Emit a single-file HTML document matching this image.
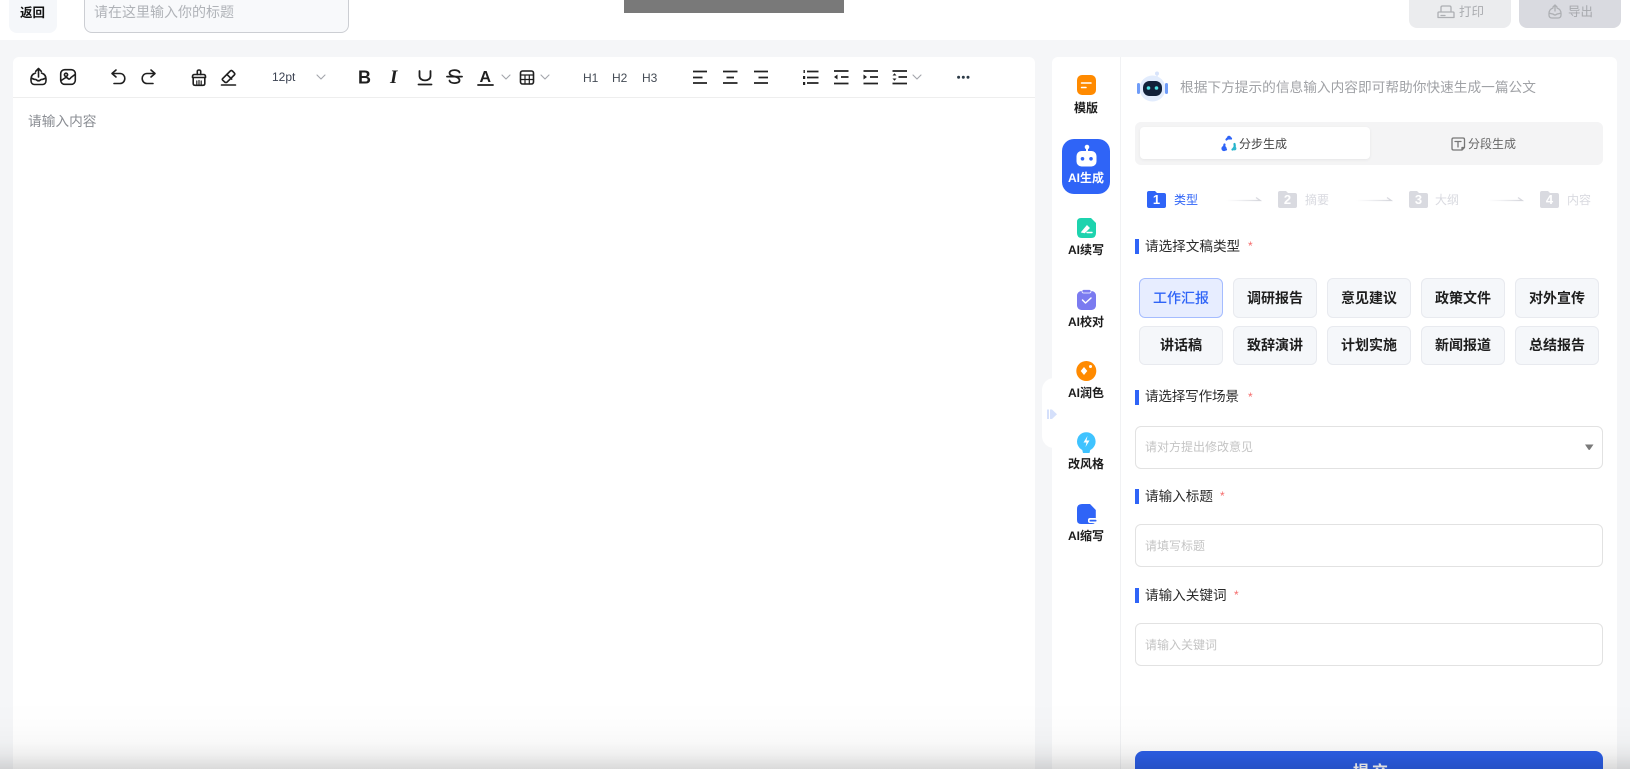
<!DOCTYPE html>
<html lang="zh-CN">
<head>
<meta charset="utf-8">
<title>AI 公文</title>
<style>
html,body{margin:0;padding:0;width:1630px;height:769px;overflow:hidden;background:#f5f6f8;font-family:"Liberation Sans","Noto Sans CJK SC",sans-serif;}
#app{position:relative;width:1630px;height:769px;overflow:hidden;background:#f5f6f8;}
div,span{position:absolute;box-sizing:border-box;}
.t{white-space:nowrap;line-height:20px;height:20px;}
.nav{width:48px;left:1062px;text-align:center;font-size:12px;font-weight:700;color:#1c1c1c;}
.chip{width:84px;background:#f5f7fa;border:1px solid #e8eaef;border-radius:6px;text-align:center;font-size:14px;font-weight:700;color:#1e1e1e;line-height:37px;}
.chip.a{background:#e7edff;border-color:#a5bcff;color:#2f64f7;font-weight:500;}
.bar{left:1135px;width:3.5px;height:15px;background:#2f64f7;}
.lab{left:1145px;font-size:13.6px;color:#2a2a2a;}
.star{font-size:12px;color:#f56c6c;}
.inp{left:1135px;width:468px;height:43px;background:#fff;border:1px solid #e2e2e2;border-radius:6px;}
.ph{left:1145px;font-size:12px;color:#c4c4c4;}
.step{font-size:12px;color:#d9dae0;}
.num{font-family:"Liberation Sans",sans-serif;font-size:13px;font-weight:700;color:#fff;width:19px;text-align:center;}
</style>
</head>
<body>
<div id="app">
<div style="left:0;top:0;width:1630px;height:40px;background:#fff;"></div>
<div style="left:9px;top:-8px;width:48px;height:41px;background:#f5f7fa;border-radius:8px;"></div>
<span class="t" style="left:20px;top:3px;font-size:12.5px;font-weight:700;color:#111;">返回</span>
<div style="left:84px;top:-8px;width:265px;height:41px;background:#f8f9fb;border:1px solid #ccced3;border-radius:8px;"></div>
<span class="t" style="left:94px;top:2px;font-size:14px;color:#b0b3b8;">请在这里输入你的标题</span>
<div style="left:624px;top:0;width:220px;height:13px;background:#797979;"></div>
<div style="left:1409px;top:-8px;width:102px;height:36px;background:#ebecee;border-radius:8px;"></div>
<div style="left:1519px;top:-8px;width:102px;height:36px;background:#d9dae0;border-radius:8px;"></div>
<span class="t" style="left:1459px;top:2px;font-size:12.5px;color:#aaacb0;">打印</span>
<span class="t" style="left:1568px;top:2px;font-size:12.5px;color:#a6a8ad;">导出</span>

<div style="left:13px;top:57px;width:1022px;height:720px;background:#fff;border-radius:6px 6px 0 0;"></div>
<div style="left:13px;top:97px;width:1022px;height:1px;background:#eeeeee;"></div>
<span class="t" style="left:272px;top:67px;font-size:12px;color:#3b4252;">12pt</span>
<span class="t" style="left:583px;top:68px;font-size:12px;color:#444b55;">H1</span>
<span class="t" style="left:612px;top:68px;font-size:12px;color:#444b55;">H2</span>
<span class="t" style="left:642px;top:68px;font-size:12px;color:#444b55;">H3</span>
<span class="t" style="left:28px;top:112px;font-size:13.7px;color:#8a8d93;">请输入内容</span>

<div style="left:1052px;top:57px;width:565px;height:720px;background:#fff;border-radius:6px 6px 0 0;"></div>
<div style="left:1120px;top:57px;width:1px;height:720px;background:#f1f2f4;"></div>
<div style="left:1042px;top:378px;width:14px;height:70px;background:#fff;border-radius:12px 0 0 12px;"></div>

<div style="left:1062px;top:139px;width:48px;height:55px;background:#2f64f7;border-radius:12px;"></div>
<span class="t nav" style="top:98px;">模版</span>
<span class="t nav" style="top:168px;color:#fff;">AI生成</span>
<span class="t nav" style="top:240px;">AI续写</span>
<span class="t nav" style="top:312px;">AI校对</span>
<span class="t nav" style="top:383px;">AI润色</span>
<span class="t nav" style="top:454px;">改风格</span>
<span class="t nav" style="top:526px;">AI缩写</span>

<span class="t" style="left:1180px;top:78px;font-size:13.7px;color:#a0a2a6;">根据下方提示的信息输入内容即可帮助你快速生成一篇公文</span>
<div style="left:1135px;top:122px;width:468px;height:43px;background:#f4f4f5;border-radius:6px;"></div>
<div style="left:1140px;top:127px;width:230px;height:32px;background:#fff;border-radius:4px;box-shadow:0 1px 3px rgba(0,0,0,.06);"></div>
<span class="t" style="left:1239px;top:134px;font-size:12px;color:#444;">分步生成</span>
<span class="t" style="left:1468px;top:134px;font-size:12px;color:#666;">分段生成</span>

<span class="t step" style="left:1174px;top:190px;color:#2f64f7;">类型</span>
<span class="t step" style="left:1305px;top:190px;">摘要</span>
<span class="t step" style="left:1435px;top:190px;">大纲</span>
<span class="t step" style="left:1567px;top:190px;">内容</span>

<div class="bar" style="top:239px;"></div>
<span class="t lab" style="top:237px;">请选择文稿类型</span>
<span class="t star" style="left:1248px;top:236px;">*</span>

<div class="chip a" style="left:1139px;top:278px;height:40px;line-height:38px;">工作汇报</div>
<div class="chip" style="left:1233px;top:278px;height:40px;line-height:38px;">调研报告</div>
<div class="chip" style="left:1327px;top:278px;height:40px;line-height:38px;">意见建议</div>
<div class="chip" style="left:1421px;top:278px;height:40px;line-height:38px;">政策文件</div>
<div class="chip" style="left:1515px;top:278px;height:40px;line-height:38px;">对外宣传</div>
<div class="chip" style="left:1139px;top:326px;height:39px;">讲话稿</div>
<div class="chip" style="left:1233px;top:326px;height:39px;">致辞演讲</div>
<div class="chip" style="left:1327px;top:326px;height:39px;">计划实施</div>
<div class="chip" style="left:1421px;top:326px;height:39px;">新闻报道</div>
<div class="chip" style="left:1515px;top:326px;height:39px;">总结报告</div>

<div class="bar" style="top:390px;"></div>
<span class="t lab" style="top:387px;letter-spacing:-.2px;">请选择写作场景</span>
<span class="t star" style="left:1248px;top:387px;">*</span>
<div class="inp" style="top:426px;"></div>
<span class="t ph" style="top:437px;">请对方提出修改意见</span>

<div class="bar" style="top:489px;"></div>
<span class="t lab" style="top:487px;">请输入标题</span>
<span class="t star" style="left:1220px;top:486px;">*</span>
<div class="inp" style="top:524px;"></div>
<span class="t ph" style="top:536px;">请填写标题</span>

<div class="bar" style="top:588px;"></div>
<span class="t lab" style="top:586px;">请输入关键词</span>
<span class="t star" style="left:1234px;top:585px;">*</span>
<div class="inp" style="top:623px;"></div>
<span class="t ph" style="top:635px;">请输入关键词</span>

<div style="left:1135px;top:751px;width:468px;height:44px;background:#2c5fe8;border-radius:8px;"></div>
<span class="t" style="left:1353px;top:763px;font-size:16px;font-weight:700;color:#fff;letter-spacing:3px;">提交</span>

<svg width="1630" height="769" viewBox="0 0 1630 769" style="position:absolute;left:0;top:0;">
<g fill="none" stroke="#adafb3" stroke-width="1.3" stroke-linecap="round" stroke-linejoin="round">
<path d="M1441 12V7.5Q1441 6 1442.5 6H1449.5Q1451 6 1451 7.5V12M1439 12H1453Q1454 12 1454 13V17.5H1438V13Q1438 12 1439 12ZM1441 15.5H1445"/>
<path d="M1553 8C1550 9 1549 11 1549 13.5V15C1549 17 1550 18 1552 18H1558C1560 18 1561 17 1561 15V13.5C1561 11 1560 9 1557 8M1555 5V11M1553 7L1555 5L1557 7M1549 13Q1552 14 1553 14Q1555 16 1557 14Q1558 14 1561 13"/>
</g>

<g fill="none" stroke="#1f1f1f" stroke-width="1.6" stroke-linecap="round" stroke-linejoin="round">
<g transform="translate(38.5,76.5)">
<path d="M-3 -3.5C-6 -2.5 -7.5 -.5 -7.5 2.5V4C-7.5 6.500 -6 8 -4 8H4C6 8 7.5 6.500 7.5 4V2.5C7.5 -.5 6 -2.500 3 -3.500"/>
<path d="M0 -8V0.500M-2.800 -5.200L0 -8L2.800 -5.200"/>
<path d="M-7.300 1.500Q-4.500 3 -2.600 3Q0 5.500 2.600 3Q4.500 3 7.300 1.500"/>
</g>
<g transform="translate(68,77)">
<rect x="-7.3" y="-7.3" width="14.6" height="14.6" rx="4"/>
<circle cx="-2" cy="-2.2" r="1.6"/>
<path d="M-6.8 3.5L-3 1Q-1.5 0 0 1.5Q1.5 3 3 .5L7 -2.5"/>
</g>
<g transform="translate(118.5,77)">
<path d="M-2.5 -7L-6.5 -3.5L-2.5 0"/>
<path d="M-6.2 -3.5H1.5C4.5 -3.5 6.3 -1.2 6.3 1.5C6.3 4.3 4.3 6.5 1.5 6.5H-4.5"/>
</g>
<g transform="translate(148.5,77)">
<path d="M2.5 -7L6.5 -3.5L2.5 0"/>
<path d="M6.2 -3.5H-1.5C-4.5 -3.5 -6.3 -1.2 -6.3 1.5C-6.3 4.3 -4.3 6.5 -1.5 6.5H4.5"/>
</g>
<g transform="translate(199,78)">
<path d="M-1.7 -3.5V-6.5Q-1.7 -8 0 -8Q1.7 -8 1.7 -6.5V-3.5"/>
<path d="M-6.5 -.5V-1.5Q-6.5 -3.5 -4.5 -3.5H4.5Q6.5 -3.5 6.5 -1.5V-.5H-6.5Z"/>
<path d="M-5.8 -.5V5.5Q-5.8 7.3 -4 7.3H4Q5.8 7.3 5.8 5.5V-.5"/>
<path d="M-2.2 3V7M0 2.5V7M2.2 3V7" stroke-width="1.2"/>
</g>
<g transform="translate(228.5,77)">
<path d="M-5.8 1.6L1.8 -6Q2.8 -7 3.9 -6L5.8 -4.1Q6.8 -3 5.8 -2L-1.8 5.4H-3.4L-5.8 3.2Q-6.6 2.4 -5.8 1.6Z"/>
<path d="M-1.6 -2.6L3.2 2.1"/>
<path d="M-7 8H7"/>
</g>
</g>

<g fill="none" stroke="#a3a6ac" stroke-width="1.1" stroke-linecap="round" stroke-linejoin="round">
<path d="M317 75L321 79L325 75"/>
<path d="M502 75L506 79L510 75"/>
<path d="M541 75L545 79L549 75"/>
<path d="M913 75L917 79L921 75"/>
</g>

<g fill="#1f1f1f" font-family="Liberation Sans, sans-serif" font-size="18">
<text x="358" y="83.5" font-weight="700">B</text>
<text x="390" y="83" font-family="Liberation Serif, serif" font-style="italic" font-weight="700" font-size="19">I</text>
<text x="479.500" y="82" font-size="16" font-weight="700">A</text>
</g>
<g fill="none" stroke="#1f1f1f" stroke-width="1.8" stroke-linecap="round" stroke-linejoin="round">
<path d="M419.500 71V76C419.500 81.800 430.500 81.800 430.500 76V71"/>
<path d="M418.500 84.500H431.500"/>
<path d="M459.500 72.500C459 69.500 450 69 449.500 73C449.500 75 452 76 454.500 76.500C457 77 459.500 78 459.500 80.500C459.500 84 450 84 449.500 80.500"/>
<path d="M447 76.600H462"/>
<path d="M478 85H493"/>
<rect x="520.500" y="71" width="13" height="13" rx="2" stroke-width="1.600"/>
<path d="M520.500 75H533.500M520.500 79.500H533.500M525 75V84M529.300 75V84" stroke-width="1.200"/>
</g>

<g fill="none" stroke="#222" stroke-width="1.700">
<path d="M693 71.500H707M693 77.500H702.500M693 83H707"/>
<path d="M723 71.500H737.500M726.500 77.500H734M723 83H737.500"/>
<path d="M754 71.500H768M758.500 77.500H768M754 83H768"/>
<path d="M807 71.500H818.500M807 77.500H818.500M807 83H818.500"/>
<path d="M834 71H848.500M841 77H848.500M834 83.500H848.500"/>
<path d="M863.500 71H878M870 77H878M863.500 83.500H878"/>
<path d="M892.500 71H907M898.500 77H907M892.500 83.500H907"/>
</g>
<g fill="#222">
<path d="M837.500 74.500V79.500L834 77Z"/>
<path d="M863.500 74.500V79.500L867 77Z"/>
<path d="M892.500 75.500H896.500L894.500 73.300ZM892.500 78.500H896.500L894.500 80.700Z"/>
<rect x="803.500" y="70" width="1.400" height="3"/>
<rect x="803" y="76" width="2.200" height="3"/>
<rect x="803" y="82" width="2.200" height="3"/>
<circle cx="958.600" cy="77.300" r="1.500" fill="#2c3a46"/>
<circle cx="963.300" cy="77.300" r="1.500" fill="#2c3a46"/>
<circle cx="968" cy="77.300" r="1.500" fill="#2c3a46"/>
</g>

<rect x="1077" y="75" width="19" height="20" rx="5" fill="#ff8a00"/>
<path d="M1081.500 83H1091M1081.500 87.500H1086" stroke="#fff" stroke-width="1.500" stroke-linecap="round"/>

<g fill="#fff">
<circle cx="1087" cy="147" r="2.300"/>
<rect x="1086" y="148" width="2" height="4"/>
<rect x="1076.500" y="151" width="20" height="15.500" rx="5"/>
</g>
<circle cx="1082.500" cy="158.800" r="1.800" fill="#2f64f7"/>
<circle cx="1091" cy="158.800" r="1.800" fill="#2f64f7"/>

<path d="M1081 218H1091L1096 223V233Q1096 238 1091 238H1082Q1077 238 1077 233V222Q1077 218 1081 218Z" fill="#1dd3ae"/>
<path d="M1082 232L1087 226L1089 228L1084.500 232.500ZM1087 232.500H1092" stroke="#fff" stroke-width="1.400" fill="#fff" stroke-linecap="round"/>

<rect x="1077" y="291" width="19" height="19" rx="4.500" fill="#7b7bf0"/>
<rect x="1082" y="289.500" width="9" height="3.500" rx="1.500" fill="#7b7bf0" stroke="#fff" stroke-width=".7"/>
<path d="M1082.500 300L1085.500 303L1091 298" fill="none" stroke="#fff" stroke-width="1.500" stroke-linecap="round" stroke-linejoin="round"/>

<circle cx="1086.300" cy="371" r="10" fill="#ff8a00"/>
<path d="M1084 367L1087.300 371L1084 375L1080.700 371Z" fill="#fff"/>
<circle cx="1090.500" cy="366.500" r="1.500" fill="#fff"/>

<circle cx="1086.300" cy="441.500" r="9.300" fill="#3fc3ff"/>
<path d="M1082 449H1090.500L1089.500 453H1083Z" fill="#3fc3ff"/>
<path d="M1087.500 436L1083.500 442.500H1086.500L1085.500 447L1089.500 440.500H1086.500Z" fill="#fff"/>

<path d="M1082 504H1090L1095.800 510V520Q1095.800 524 1091.800 524H1081Q1077 524 1077 520V509Q1077 504 1082 504Z" fill="#2f64f7"/>
<rect x="1088" y="518" width="9" height="5" rx="2" fill="#fff"/>
<rect x="1089.500" y="519.800" width="7" height="1.700" rx=".8" fill="#2f64f7"/>

<path d="M1047 409.500H1049V419H1047ZM1050 409.500H1052L1057 414.300L1052 419H1050Z" fill="#d5e0fb"/>

<!-- robot -->
<circle cx="1157" cy="73.500" r="2" fill="#d8e4fb"/>
<rect x="1156.400" y="75" width="1.200" height="3" fill="#d8e4fb"/>
<circle cx="1152.500" cy="88.500" r="13" fill="#e2ecfd"/>
<rect x="1137" y="83" width="3" height="11" rx="1.500" fill="#6f9cf8"/>
<rect x="1165" y="83" width="3" height="11" rx="1.500" fill="#6f9cf8"/>
<rect x="1143" y="81" width="19" height="15" rx="6.500" fill="#12213a"/>
<circle cx="1148.500" cy="88" r="1.800" fill="#4fe3e6"/>
<circle cx="1156.500" cy="88" r="1.800" fill="#4fe3e6"/>

<g fill="none" stroke="#2f64f7" stroke-width="2.200" stroke-linecap="round">
<path d="M1226.500 139.500Q1228.500 137 1231 138.500"/>
<path d="M1234.500 144Q1235.500 148 1232.500 149.500" stroke="#22b3c9"/>
<path d="M1226 149.500Q1223.500 147.500 1224.500 144.500"/>
</g>
<circle cx="1229" cy="137.700" r="1.900" fill="#2f64f7"/>
<circle cx="1234.500" cy="148.500" r="1.900" fill="#2fb8d0"/>
<circle cx="1224" cy="148.500" r="2.600" fill="#2f64f7"/>
<g fill="none" stroke="#777" stroke-width="1.300" stroke-linejoin="round" stroke-linecap="round">
<path d="M1462 150H1453.500Q1452 150 1452 148.500V139.500Q1452 138 1453.500 138H1463Q1464.500 138 1464.500 139.500V147.500L1462 150V147.500H1464.500"/>
<path d="M1455 141.500H1461M1458 141.500V147"/>
</g>

<path d="M1147 193Q1147 191 1149 191H1155L1157 193H1164Q1166 193 1166 195V206Q1166 208 1164 208H1149Q1147 208 1147 206Z" fill="#2f64f7"/>
<path d="M1278 193Q1278 191 1280 191H1286L1288 193H1295Q1297 193 1297 195V206Q1297 208 1295 208H1280Q1278 208 1278 206Z" fill="#d9dae0"/>
<path d="M1409 193Q1409 191 1411 191H1417L1419 193H1426Q1428 193 1428 195V206Q1428 208 1426 208H1411Q1409 208 1409 206Z" fill="#d9dae0"/>
<path d="M1540 193Q1540 191 1542 191H1548L1550 193H1557Q1559 193 1559 195V206Q1559 208 1557 208H1542Q1540 208 1540 206Z" fill="#d9dae0"/>
<defs><linearGradient id="g" gradientUnits="objectBoundingBox" x1="0" x2="1" y1="0" y2="0"><stop offset="0" stop-color="#dcdde2" stop-opacity="0"/><stop offset="1" stop-color="#d5d6dc"/></linearGradient></defs>
<g fill="none" stroke="url(#g)" stroke-width="1.300">
<path d="M1226 200.500H1260.100L1256 197.500"/>
<path d="M1356 200.500H1391.100L1387 197.500"/>
<path d="M1488 200.500H1522.100L1518 197.500"/>
</g>

<path d="M1585 444.500H1593.500L1590 449.500Q1589.200 450.500 1588.400 449.500Z" fill="#7a7a7a"/>
</svg>

<span class="t num" style="left:1147px;top:190px;">1</span>
<span class="t num" style="left:1278px;top:190px;">2</span>
<span class="t num" style="left:1409px;top:190px;">3</span>
<span class="t num" style="left:1540px;top:190px;">4</span>

<div style="left:0;top:700px;width:1630px;height:69px;background:linear-gradient(to bottom,rgba(0,0,0,0) 0,rgba(0,0,0,.008) 35%,rgba(0,0,0,.025) 60%,rgba(0,0,0,.06) 78%,rgba(0,0,0,.145) 100%);"></div>
</div>
</body>
</html>
